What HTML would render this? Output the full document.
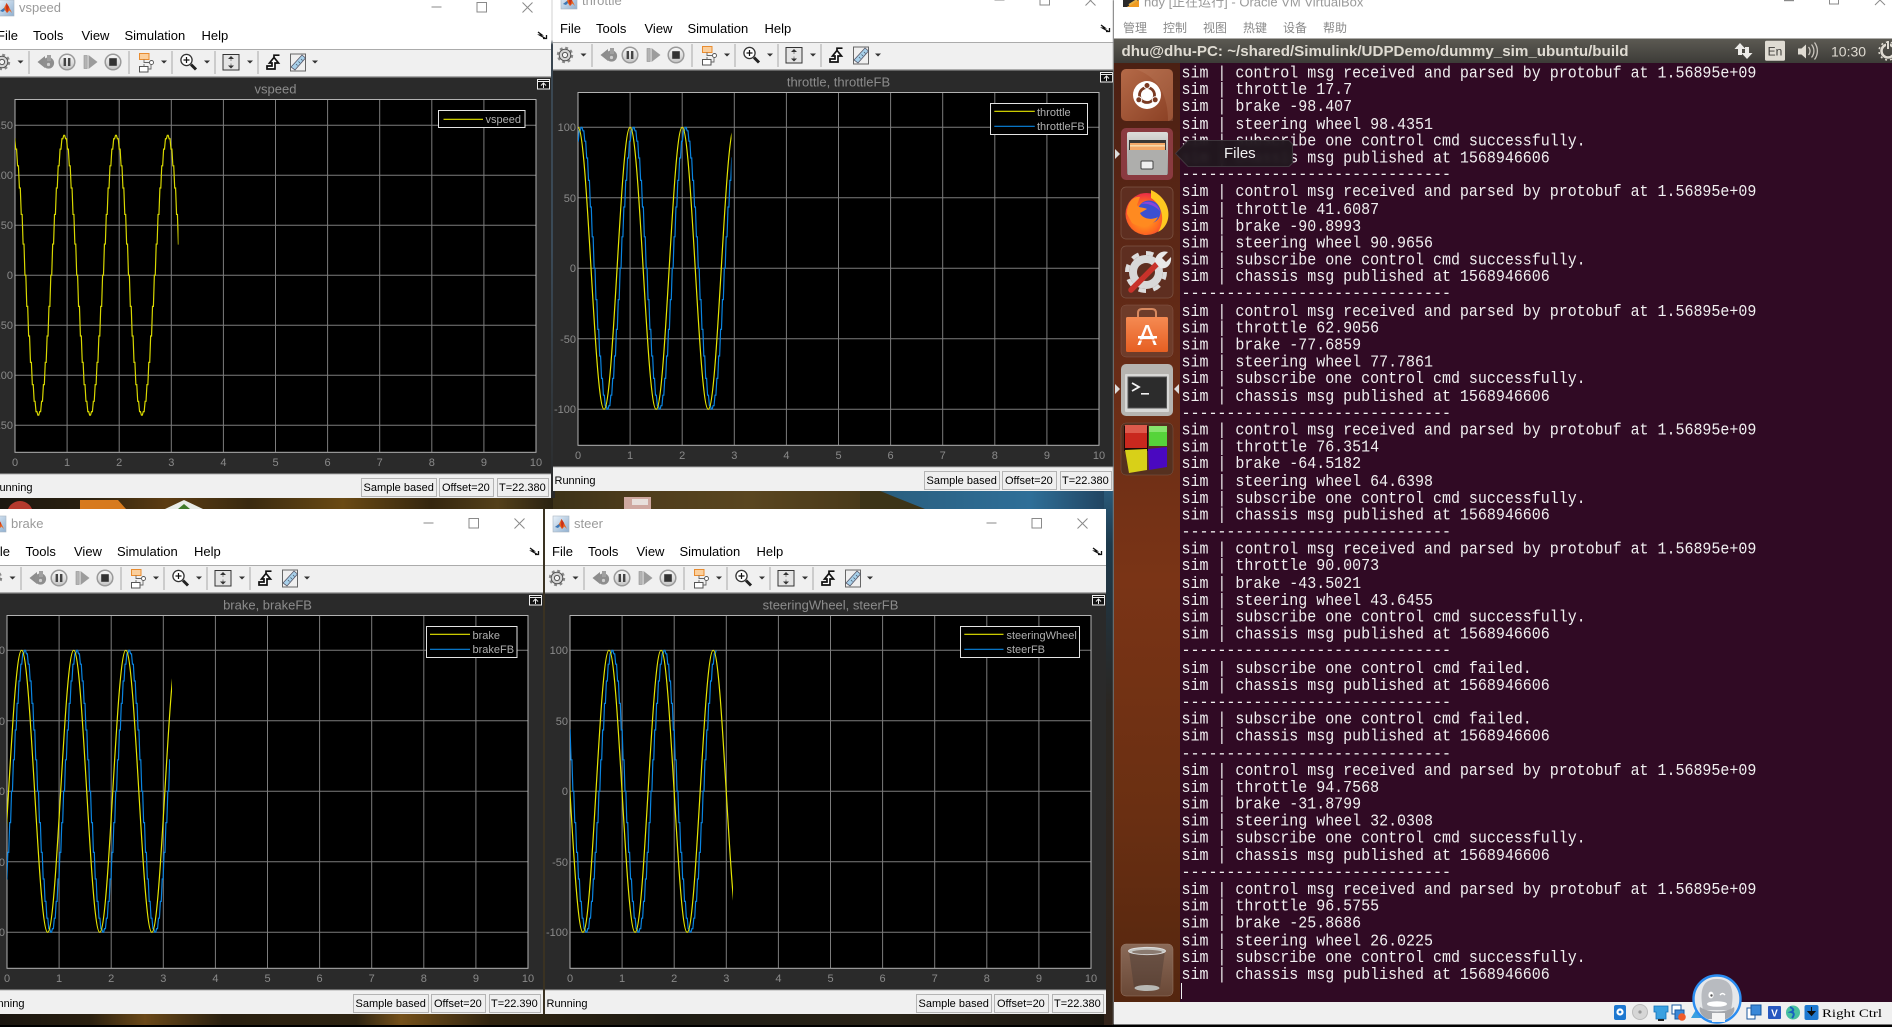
<!DOCTYPE html>
<html><head><meta charset="utf-8"><title>Simulink scopes and VirtualBox terminal</title>
<style>
html,body{margin:0;padding:0;width:1892px;height:1027px;overflow:hidden;background:#000}
.abs{position:absolute}
svg{position:absolute;overflow:hidden}
svg text{font-family:"Liberation Sans","Noto Sans CJK SC",sans-serif}
.w{position:absolute;width:561px;height:505px}
.m{font-size:13px;fill:#000}.tt{font-size:13px;fill:#9a9a9a}.at{font-size:13px;fill:#8c8c8c;text-anchor:middle}
.xl{font-size:11px;fill:#8a8a8a;text-anchor:middle}.yl{font-size:11px;fill:#8a8a8a;text-anchor:end}
.lg{font-size:11px;fill:#b0b0b0}.st{font-size:11px;fill:#000}
#term{position:absolute;left:1180px;top:63px;width:712px;height:939px;background:#300a24;overflow:hidden}
#term pre{position:absolute;left:1.5px;top:2px;margin:0;font:15px/15.18px "Liberation Mono",monospace;color:#f0eff0;letter-spacing:-.02px;transform:scaleY(1.12);transform-origin:0 0}
#tip{position:absolute;left:1175px;top:140px;width:118px;height:27px;background:rgba(32,24,30,.93);backdrop-filter:blur(2.5px);clip-path:polygon(0 50%,13px 0,calc(100% - 4px) 0,100% 4px,100% calc(100% - 4px),calc(100% - 4px) 100%,13px 100%);color:#f2f2f2;font:15px "Liberation Sans",sans-serif;line-height:27px;text-indent:49px}
</style></head><body>

<svg width="0" height="0" style="position:absolute">
<defs>
<linearGradient id="ml" x1="0" y1="0" x2="1" y2="1"><stop offset="0" stop-color="#eaf2fa"/><stop offset="1" stop-color="#8fb0d0"/></linearGradient>
<linearGradient id="btn" x1="0" y1="0" x2="0" y2="1"><stop offset="0" stop-color="#fafafa"/><stop offset="1" stop-color="#c4c4c4"/></linearGradient>
<linearGradient id="pn" x1="0" y1="0" x2="0" y2="1"><stop offset="0" stop-color="#5c5a53"/><stop offset="1" stop-color="#3c3b37"/></linearGradient>
<linearGradient id="ub" x1="0" y1="0" x2="1" y2="1"><stop offset="0" stop-color="#b56a48"/><stop offset="1" stop-color="#8a4024"/></linearGradient>
<linearGradient id="cab" x1="0" y1="0" x2="0" y2="1"><stop offset="0" stop-color="#dcdcda"/><stop offset="1" stop-color="#8e8e8c"/></linearGradient>
<linearGradient id="bag" x1="0" y1="0" x2="0" y2="1"><stop offset="0" stop-color="#f58a52"/><stop offset="1" stop-color="#e65f22"/></linearGradient>
<linearGradient id="trs" x1="0" y1="0" x2="0" y2="1"><stop offset="0" stop-color="#8a6a58"/><stop offset="1" stop-color="#6a4836"/></linearGradient>
<radialGradient id="ff" cx=".45" cy=".6" r=".6"><stop offset="0" stop-color="#ffb020"/><stop offset=".6" stop-color="#ff6a20"/><stop offset="1" stop-color="#ea2c48"/></radialGradient>

<g id="matlab">
<rect x="0" y="0" width="16" height="16" fill="url(#ml)" stroke="#a8b4c0" stroke-width=".6"/>
<path d="M2 11 L6 8 L8.5 3 L11 7 L14 13 L11.5 10.5 L9 13 L6.5 9.5Z" fill="#e8601c"/>
<path d="M2 11 L6 8 L7 10 L5 12Z" fill="#3a78b8"/>
<path d="M8.5 3 L11 7 L9 13 L8 8Z" fill="#c8301a"/>
</g>

<g id="tb">
<rect width="561" height="26" fill="#f0f0f0"/>
<g stroke="#a8a8a8" stroke-width="1"><path d="M39 1V24M139 1V24M182 1V24M225 1V24M268 1V24"/></g>
<g fill="#333"><path d="M27.5 10.5h6l-3 3zM171 10.5h6l-3 3zM214 10.5h6l-3 3zM257 10.5h6l-3 3zM322 10.5h6l-3 3z"/></g>
<!-- gear -->
<circle cx="12" cy="12" r="7" fill="none" stroke="#8a8a8a" stroke-width="2.4" stroke-dasharray="2.8 2.7"/>
<circle cx="12" cy="12" r="5.8" fill="#d4d4d4" stroke="#555" stroke-width="1"/>
<circle cx="12" cy="12" r="2.6" fill="#f4f4f4" stroke="#555" stroke-width="1"/>
<!-- back -->
<path d="M47.5 12 L55 6 V18Z" fill="#8c8c8c"/><circle cx="58.5" cy="13" r="5.6" fill="#8e8e8e"/><rect x="57" y="5" width="4" height="6" fill="#a0a0a0"/><circle cx="58.5" cy="14.5" r="1.6" fill="#cfcfcf"/>
<!-- pause -->
<circle cx="77" cy="12" r="7.8" fill="url(#btn)" stroke="#9a9a9a" stroke-width="1.5"/><rect x="73.6" y="8" width="2.4" height="8" fill="#444"/><rect x="78" y="8" width="2.4" height="8" fill="#444"/>
<!-- step -->
<rect x="94" y="5.5" width="3.2" height="13" fill="#b4b4b4" stroke="#909090" stroke-width=".6"/><path d="M98.5 5 L107.5 12 L98.5 19Z" fill="#9c9c9c"/>
<!-- stop -->
<circle cx="123" cy="12" r="7.8" fill="url(#btn)" stroke="#9a9a9a" stroke-width="1.5"/><rect x="119.2" y="8.2" width="7.6" height="7.6" fill="#333"/>
<!-- block -->
<rect x="149.5" y="3.5" width="9.5" height="6" fill="#fbcf9c" stroke="#e88c30" stroke-width="1"/>
<rect x="149.5" y="16.5" width="8.5" height="5.5" fill="#fff" stroke="#555" stroke-width="1"/>
<circle cx="161.5" cy="12.5" r="2" fill="#fff" stroke="#555" stroke-width=".9"/><path d="M154 9.5V12.5H159M154 16.5V14M158 19H161V14.5" fill="none" stroke="#666" stroke-width=".9"/>
<!-- zoom -->
<circle cx="196.5" cy="10" r="5.6" fill="#fff" stroke="#333" stroke-width="1.3"/><path d="M193.5 10h6M196.5 7v6" stroke="#111" stroke-width="1.2"/><path d="M201 14.5 L206 19.5" stroke="#222" stroke-width="3"/>
<!-- scale -->
<rect x="233" y="4.5" width="16" height="15.5" fill="#e4e4e4" stroke="#333" stroke-width="1"/><path d="M241 6l-3 3h6zM241 18.5l-3-3h6z" fill="#333"/><path d="M241 9v2M241 13.5v2" stroke="#888" stroke-width="1"/>
<!-- stairs arrow -->
<path d="M277 19h8v-6h3.5l-4.5-5.5-4.5 5.5h2.5v3h-5z" fill="#fff" stroke="#111" stroke-width="1.7" stroke-linejoin="miter"/><path d="M284 7V5.2H289.5" fill="none" stroke="#111" stroke-width="1.7"/>
<!-- ruler -->
<rect x="300.5" y="4" width="15" height="17" fill="#efefef" stroke="#666" stroke-width="1"/><path d="M301 17 L312 5 L315.5 8 L305 20Z" fill="#a8d0ea" stroke="#556" stroke-width=".8"/><path d="M306 14l1.5 1.5M308.5 11.5l1.5 1.5M311 9l1.5 1.5" stroke="#456" stroke-width=".7"/>
</g>

<g id="ch">
<rect width="561" height="505" fill="#fff"/>
<rect y="56" width="561" height="1.2" fill="#ababab"/>
<use href="#tb" y="57"/>
<rect y="83" width="561" height="1.4" fill="#ababab"/>
<rect y="84.4" width="561" height="397" fill="#2a2a2a"/>
<rect y="481" width="561" height="24" fill="#f0f0f0"/>
<rect y="480.6" width="561" height="1.2" fill="#c8c8c8"/>
<g fill="#efefef" stroke="#b4b4b4" stroke-width="1"><rect x="371.5" y="485.5" width="75" height="18"/><rect x="449.5" y="485.5" width="54" height="18"/><rect x="507.5" y="485.5" width="51" height="18"/></g>
<path d="M441.5 14h10" stroke="#8a8a8a" stroke-width="1"/><rect x="487" y="9.5" width="9.5" height="9.5" fill="none" stroke="#8a8a8a" stroke-width="1"/><path d="M532.5 9.5l10 10M542.5 9.5l-10 10" stroke="#8a8a8a" stroke-width="1"/>
<path d="M548 39l4 3h-2.5l6 3.5M553 45.5h3.5v-3.5" fill="none" stroke="#111" stroke-width="1.3"/>
<rect x="547.5" y="86.5" width="12" height="9.5" fill="#111" stroke="#eee" stroke-width="1"/><path d="M548 88.5h11" stroke="#eee"/><path d="M553.5 95V90.5M551 92.5l2.5-2.5 2.5 2.5" fill="none" stroke="#eee" stroke-width="1"/>
<rect x="25" y="106.5" width="521" height="352.8" fill="#000"/>
<path d="M77.1 106.5V459.3M129.2 106.5V459.3M181.3 106.5V459.3M233.4 106.5V459.3M285.5 106.5V459.3M337.6 106.5V459.3M389.7 106.5V459.3M441.8 106.5V459.3M493.9 106.5V459.3" stroke="#7c7c7c" stroke-width="1" fill="none"/>
</g>

<g id="fr"><rect x="25" y="106.5" width="521" height="352.8" fill="none" stroke="#b2b2b2" stroke-width="1"/></g>

<path id="ys" d="M0 0c9.49 0 16.56 282 26.05 282s16.56-282 26.05-282s16.56 282 26.05 282s16.56-282 26.05-282s16.56 282 26.05 282s16.56-282 26.05-282s16.56 282 26.05 282s16.56-282 26.05-282s16.56 282 26.05 282s16.56-282 26.05-282s16.56 282 26.05 282s16.56-282 26.05-282" fill="none" stroke-width="1.2"/>
<path id="bs" d="M0 0h.9l.96 3.5h.9l.96 10.4h.9l.96 16.8h.9l.96 22.4h.9l.96 26.6h.9l.96 29.8h.9l.96 31.4h.9l.96 31.4h.9l.96 29.8h.9l.96 26.6h.9l.96 22.4h.9l.96 16.8h.9l.96 10.4h.9l.96 3.5h.9l.96-3.5h.9l.96-10.4h.9l.96-16.8h.9l.96-22.4h.9l.96-26.6h.9l.96-29.8h.9l.96-31.4h.9l.96-31.4h.9l.96-29.8h.9l.96-26.6h.9l.96-22.4h.9l.96-16.8h.9l.96-10.4h.9l.96-3.5h.9l.96 3.5h.9l.96 10.4h.9l.96 16.8h.9l.96 22.4h.9l.96 26.6h.9l.96 29.8h.9l.96 31.4h.9l.96 31.4h.9l.96 29.8h.9l.96 26.6h.9l.96 22.4h.9l.96 16.8h.9l.96 10.4h.9l.96 3.5h.9l.96-3.5h.9l.96-10.4h.9l.96-16.8h.9l.96-22.4h.9l.96-26.6h.9l.96-29.8h.9l.96-31.4h.9l.96-31.4h.9l.96-29.8h.9l.96-26.6h.9l.96-22.4h.9l.96-16.8h.9l.96-10.4h.9l.96-3.5h.9l.96 3.5h.9l.96 10.4h.9l.96 16.8h.9l.96 22.4h.9l.96 26.6h.9l.96 29.8h.9l.96 31.4h.9l.96 31.4h.9l.96 29.8h.9l.96 26.6h.9l.96 22.4h.9l.96 16.8h.9l.96 10.4h.9l.96 3.5h.9l.96-3.5h.9l.96-10.4h.9l.96-16.8h.9l.96-22.4h.9l.96-26.6h.9l.96-29.8h.9l.96-31.4h.9l.96-31.4h.9l.96-29.8h.9l.96-26.6h.9l.96-22.4h.9l.96-16.8h.9l.96-10.4h.9l.96-3.5h.9l.96 3.5h.9l.96 10.4h.9l.96 16.8h.9l.96 22.4h.9l.96 26.6h.9l.96 29.8h.9l.96 31.4h.9l.96 31.4h.9l.96 29.8h.9l.96 26.6h.9l.96 22.4h.9l.96 16.8h.9l.96 10.4h.9l.96 3.5h.9l.96-3.5h.9l.96-10.4h.9l.96-16.8h.9l.96-22.4h.9l.96-26.6h.9l.96-29.8h.9l.96-31.4h.9l.96-31.4h.9l.96-29.8h.9l.96-26.6h.9l.96-22.4h.9l.96-16.8h.9l.96-10.4h.9l.96-3.5" fill="none" stroke-width="1.2"/>

<clipPath id="cv"><rect x="25" y="106" width="163.5" height="353"/></clipPath>
<clipPath id="ct"><rect x="25" y="106" width="153.5" height="353"/></clipPath>
<clipPath id="cb"><rect x="25" y="106" width="165" height="353"/></clipPath>
<clipPath id="cb2"><rect x="25" y="106" width="163" height="353"/></clipPath>
<clipPath id="cs"><rect x="25" y="106" width="163" height="353"/></clipPath>
<clipPath id="cs2"><rect x="25" y="106" width="161" height="353"/></clipPath>
</defs>
</svg>

<!-- desktop wallpaper strips -->
<div class="abs" style="left:0;top:495px;width:553px;height:16px;background:linear-gradient(90deg,#1c1810 0,#2a2010 15%,#5c3c12 30%,#3a2a10 45%,#6a4a14 62%,#35260f 78%,#54401a 90%,#2a2212 100%)"></div>
<div class="abs" style="left:553px;top:488px;width:561px;height:23px;background:linear-gradient(90deg,#3c3218 0,#4e3c1c 15%,#5a4620 35%,#4a3a1a 55%,#2a5f80 60%,#2f6f98 85%,#1f3f5a 100%)"></div>
<svg width="1114" height="520" style="left:0;top:0">
<circle cx="20" cy="514" r="13" fill="#b53a2e"/>
<path d="M80 500H118L126 509H80Z" fill="#d77a1e"/>
<path d="M184 500L203 509H165Z" fill="#e8ece8"/><path d="M184 504L190 509H178Z" fill="#3f7a2a"/>
<path d="M624 497H651V509H624Z" fill="#cfa8a0"/><path d="M632 499H648V505H632Z" fill="#e8e0dc"/>
<path d="M880 491L925 509H860V491Z" fill="#3c3418"/>
</svg>
<div class="abs" style="left:0;top:1012px;width:1114px;height:13px;background:linear-gradient(90deg,#1a1610 0,#2a2010 8%,#6a4818 13%,#2a2010 20%,#2e2412 32%,#74501a 36%,#302410 44%,#1e1c14 60%,#2a2418 80%,#1a1610 100%)"></div>
<div class="abs" style="left:541px;top:509px;width:6px;height:505px;background:#3a3222"></div>
<div class="abs" style="left:1104px;top:491px;width:11px;height:534px;background:linear-gradient(180deg,#2a5a7a 0,#1e3a4c 10%,#2a2622 40%,#33241a 100%)"></div>
<div class="abs" style="left:549px;top:0;width:6px;height:498px;background:linear-gradient(180deg,#e8e8e8 0,#e8e8e8 8%,#3a4650 9%,#3a4a58 50%,#2a2a2a 100%)"></div>

<!-- vspeed -->
<div class="w" style="left:-10.5px;top:-7px"><svg width="561" height="505" style="left:0;top:0">
<use href="#ch"/>
<path d="M25 132.3H546M25 182.3H546M25 232.3H546M25 282.3H546M25 332.3H546M25 382.3H546M25 432.3H546" stroke="#7c7c7c" fill="none"/>
<use href="#fr"/>
<g clip-path="url(#cv)"><use href="#bs" transform="translate(22,142.3) scale(.994,.993)" stroke="#d8d800"/></g>
<use href="#matlab" x="8" y="7"/>
<text class="tt" x="29" y="19">vspeed</text>
<text class="m" x="7" y="47">File</text><text class="m" x="43" y="47">Tools</text><text class="m" x="91.5" y="47">View</text><text class="m" x="134.5" y="47">Simulation</text><text class="m" x="211.5" y="47">Help</text>
<text class="at" x="285.5" y="100.5">vspeed</text>
<text class="yl" x="23" y="136">150</text><text class="yl" x="23" y="186">100</text><text class="yl" x="23" y="236">50</text><text class="yl" x="23" y="286">0</text><text class="yl" x="23" y="336">-50</text><text class="yl" x="23" y="386">-100</text><text class="yl" x="23" y="436">-150</text>
<text class="xl" x="25" y="473">0</text><text class="xl" x="77.1" y="473">1</text><text class="xl" x="129.2" y="473">2</text><text class="xl" x="181.3" y="473">3</text><text class="xl" x="233.4" y="473">4</text><text class="xl" x="285.5" y="473">5</text><text class="xl" x="337.6" y="473">6</text><text class="xl" x="389.7" y="473">7</text><text class="xl" x="441.8" y="473">8</text><text class="xl" x="493.9" y="473">9</text><text class="xl" x="546" y="473">10</text>
<rect x="448.5" y="117.5" width="86.5" height="17" fill="#000" stroke="#e4e4e4"/>
<path d="M453.5 126.3H493" stroke="#e6e600" stroke-width="1.2"/><text class="lg" x="495.5" y="130">vspeed</text>
<text class="st" x="1.5" y="498">Running</text><text class="st" x="373.5" y="498">Sample based</text><text class="st" x="452" y="498">Offset=20</text><text class="st" x="509" y="498">T=22.380</text>
</svg></div>

<!-- throttle -->
<div class="w" style="left:552.5px;top:-14px"><svg width="561" height="505" style="left:0;top:0">
<use href="#ch"/>
<path d="M25 141.3H546M25 211.8H546M25 282.3H546M25 352.8H546M25 423.3H546" stroke="#7c7c7c" fill="none"/>
<use href="#fr"/>
<g clip-path="url(#ct)"><use href="#bs" transform="translate(-24,141.3)" stroke="#0a84e0"/><use href="#ys" transform="translate(-27.1,141.3)" stroke="#e6e600"/></g>
<use href="#matlab" x="8" y="7"/>
<text class="tt" x="29" y="19">throttle</text>
<text class="m" x="7" y="47">File</text><text class="m" x="43" y="47">Tools</text><text class="m" x="91.5" y="47">View</text><text class="m" x="134.5" y="47">Simulation</text><text class="m" x="211.5" y="47">Help</text>
<text class="at" x="285.5" y="100.5">throttle, throttleFB</text>
<text class="yl" x="23" y="145">100</text><text class="yl" x="23" y="216">50</text><text class="yl" x="23" y="286">0</text><text class="yl" x="23" y="357">-50</text><text class="yl" x="23" y="427">-100</text>
<text class="xl" x="25" y="473">0</text><text class="xl" x="77.1" y="473">1</text><text class="xl" x="129.2" y="473">2</text><text class="xl" x="181.3" y="473">3</text><text class="xl" x="233.4" y="473">4</text><text class="xl" x="285.5" y="473">5</text><text class="xl" x="337.6" y="473">6</text><text class="xl" x="389.7" y="473">7</text><text class="xl" x="441.8" y="473">8</text><text class="xl" x="493.9" y="473">9</text><text class="xl" x="546" y="473">10</text>
<rect x="437.5" y="117.5" width="97" height="31" fill="#000" stroke="#e4e4e4"/>
<path d="M441.3 125.3H481.8" stroke="#e6e600" stroke-width="1.2"/><path d="M441.3 140.3H481.8" stroke="#0a84e0" stroke-width="1.2"/>
<text class="lg" x="484" y="130">throttle</text><text class="lg" x="484" y="144">throttleFB</text>
<text class="st" x="1.5" y="498">Running</text><text class="st" x="373.5" y="498">Sample based</text><text class="st" x="452" y="498">Offset=20</text><text class="st" x="509" y="498">T=22.380</text>
</svg></div>

<!-- brake -->
<div class="w" style="left:-18.5px;top:509px"><svg width="561" height="505" style="left:0;top:0">
<use href="#ch"/>
<path d="M25 141.3H546M25 211.8H546M25 282.3H546M25 352.8H546M25 423.3H546" stroke="#7c7c7c" fill="none"/>
<use href="#fr"/>
<g clip-path="url(#cb2)"><use href="#bs" transform="translate(-9.5,141.3)" stroke="#0a84e0"/></g><g clip-path="url(#cb)"><use href="#ys" transform="translate(-12.5,141.3)" stroke="#e6e600"/></g>
<use href="#matlab" x="8" y="7"/>
<text class="tt" x="29" y="19">brake</text>
<text class="m" x="7" y="47">File</text><text class="m" x="43.5" y="47">Tools</text><text class="m" x="92" y="47">View</text><text class="m" x="135" y="47">Simulation</text><text class="m" x="212" y="47">Help</text>
<text class="at" x="285.5" y="100.5">brake, brakeFB</text>
<text class="yl" x="23" y="145">100</text><text class="yl" x="23" y="216">50</text><text class="yl" x="23" y="286">0</text><text class="yl" x="23" y="357">-50</text><text class="yl" x="23" y="427">-100</text>
<text class="xl" x="25" y="473">0</text><text class="xl" x="77.1" y="473">1</text><text class="xl" x="129.2" y="473">2</text><text class="xl" x="181.3" y="473">3</text><text class="xl" x="233.4" y="473">4</text><text class="xl" x="285.5" y="473">5</text><text class="xl" x="337.6" y="473">6</text><text class="xl" x="389.7" y="473">7</text><text class="xl" x="441.8" y="473">8</text><text class="xl" x="493.9" y="473">9</text><text class="xl" x="546" y="473">10</text>
<rect x="444.5" y="117.5" width="90.5" height="31" fill="#000" stroke="#e4e4e4"/>
<path d="M448 125.3H488" stroke="#e6e600" stroke-width="1.2"/><path d="M448 140.3H488" stroke="#0a84e0" stroke-width="1.2"/>
<text class="lg" x="490.5" y="130">brake</text><text class="lg" x="490.5" y="144">brakeFB</text>
<text class="st" x="1.5" y="498">Running</text><text class="st" x="373.5" y="498">Sample based</text><text class="st" x="452" y="498">Offset=20</text><text class="st" x="509" y="498">T=22.390</text>
</svg></div>

<!-- steer -->
<div class="w" style="left:544.5px;top:509px"><svg width="561" height="505" style="left:0;top:0">
<use href="#ch"/>
<path d="M25 141.3H546M25 211.8H546M25 282.3H546M25 352.8H546M25 423.3H546" stroke="#7c7c7c" fill="none"/>
<use href="#fr"/>
<g clip-path="url(#cs2)"><use href="#bs" transform="translate(-37.2,141.3)" stroke="#0a84e0"/></g><g clip-path="url(#cs)"><use href="#ys" transform="translate(-40.2,141.3)" stroke="#e6e600"/></g>
<use href="#matlab" x="8" y="7"/>
<text class="tt" x="29" y="19">steer</text>
<text class="m" x="7" y="47">File</text><text class="m" x="43" y="47">Tools</text><text class="m" x="91.5" y="47">View</text><text class="m" x="134.5" y="47">Simulation</text><text class="m" x="211.5" y="47">Help</text>
<text class="at" x="285.5" y="100.5">steeringWheel, steerFB</text>
<text class="yl" x="23" y="145">100</text><text class="yl" x="23" y="216">50</text><text class="yl" x="23" y="286">0</text><text class="yl" x="23" y="357">-50</text><text class="yl" x="23" y="427">-100</text>
<text class="xl" x="25" y="473">0</text><text class="xl" x="77.1" y="473">1</text><text class="xl" x="129.2" y="473">2</text><text class="xl" x="181.3" y="473">3</text><text class="xl" x="233.4" y="473">4</text><text class="xl" x="285.5" y="473">5</text><text class="xl" x="337.6" y="473">6</text><text class="xl" x="389.7" y="473">7</text><text class="xl" x="441.8" y="473">8</text><text class="xl" x="493.9" y="473">9</text><text class="xl" x="546" y="473">10</text>
<rect x="415.5" y="117.5" width="119" height="31" fill="#000" stroke="#e4e4e4"/>
<path d="M419.3 125.3H458.5" stroke="#e6e600" stroke-width="1.2"/><path d="M419.3 140.3H458.5" stroke="#0a84e0" stroke-width="1.2"/>
<text class="lg" x="461.5" y="130">steeringWheel</text><text class="lg" x="461.5" y="144">steerFB</text>
<text class="st" x="1.5" y="498">Running</text><text class="st" x="373.5" y="498">Sample based</text><text class="st" x="452" y="498">Offset=20</text><text class="st" x="509" y="498">T=22.380</text>
</svg></div>

<!-- VirtualBox window -->
<div class="abs" style="left:1114px;top:0;width:778px;height:1025px;background:#fff;box-shadow:-1px 0 1px #777"></div>
<svg width="779" height="64" style="left:1113px;top:0">
<path d="M10 7V0H26L14 7Z" fill="#2a2a2a"/><path d="M14 7L26 0V7Z" fill="#f09a20"/><path d="M16 5L24 0" stroke="#e8b040" stroke-width="2"/>
<text x="31" y="6.5" fill="#9a9a9a" style="font-size:13px">hdy [正在运行] - Oracle VM VirtualBox</text>
<rect x="671" y="0" width="10" height="1.2" fill="#8a8a8a"/><rect x="716.5" y="-3" width="9" height="7" fill="none" stroke="#8a8a8a"/><path d="M762 5l5-5 5 5" fill="none" stroke="#8a8a8a"/>
<g style="font-size:12px" fill="#8a8a8a"><text x="10" y="32">管理</text><text x="50" y="32">控制</text><text x="90" y="32">视图</text><text x="130" y="32">热键</text><text x="170" y="32">设备</text><text x="210" y="32">帮助</text></g>
<rect x="1" y="38.5" width="778" height="25" fill="url(#pn)"/>
<text x="8.5" y="56" fill="#dfdbd2" textLength="507" lengthAdjust="spacingAndGlyphs" style="font-size:15px;font-weight:bold">dhu@dhu-PC: ~/shared/Simulink/UDPDemo/dummy_sim_ubuntu/build</text>
<g fill="#ecebe8"><path d="M627 43l-5.5 6h3.5v6h4v-6h3.5z"/><path d="M634 59l5.5-6h-3.5v-6h-4v6h-3.5z"/></g>
<rect x="652" y="40.7" width="20" height="20" rx="1.5" fill="#dfdbd2"/><text x="662" y="55.5" text-anchor="middle" fill="#3c3b37" style="font-size:12px">En</text>
<path d="M685 48.5h3.5l4.5-4v14l-4.5-4H685z" fill="#dfdbd2"/><path d="M695.5 47a6 6 0 0 1 0 8M698.5 44.5a10 10 0 0 1 0 13M701.5 42.5a14 14 0 0 1 0 17" fill="none" stroke="#dfdbd2" stroke-width="1.3" opacity=".85"/>
<text x="718" y="56.5" fill="#dfdbd2" style="font-size:14px">10:30</text>
<circle cx="775" cy="51" r="6.5" fill="none" stroke="#dfdbd2" stroke-width="2.5"/><path d="M775 41v9" stroke="#4a4945" stroke-width="4"/><path d="M775 41v8" stroke="#dfdbd2" stroke-width="2"/><circle cx="775" cy="51" r="9" fill="none" stroke="#dfdbd2" stroke-width="1.5" stroke-dasharray="2 3"/>
</svg>

<div id="term"><pre>sim | control msg received and parsed by protobuf at 1.56895e+09
sim | throttle 17.7
sim | brake -98.407
sim | steering wheel 98.4351
sim | subscribe one control cmd successfully.
sim | chassis msg published at 1568946606
------------------------------
sim | control msg received and parsed by protobuf at 1.56895e+09
sim | throttle 41.6087
sim | brake -90.8993
sim | steering wheel 90.9656
sim | subscribe one control cmd successfully.
sim | chassis msg published at 1568946606
------------------------------
sim | control msg received and parsed by protobuf at 1.56895e+09
sim | throttle 62.9056
sim | brake -77.6859
sim | steering wheel 77.7861
sim | subscribe one control cmd successfully.
sim | chassis msg published at 1568946606
------------------------------
sim | control msg received and parsed by protobuf at 1.56895e+09
sim | throttle 76.3514
sim | brake -64.5182
sim | steering wheel 64.6398
sim | subscribe one control cmd successfully.
sim | chassis msg published at 1568946606
------------------------------
sim | control msg received and parsed by protobuf at 1.56895e+09
sim | throttle 90.0073
sim | brake -43.5021
sim | steering wheel 43.6455
sim | subscribe one control cmd successfully.
sim | chassis msg published at 1568946606
------------------------------
sim | subscribe one control cmd failed.
sim | chassis msg published at 1568946606
------------------------------
sim | subscribe one control cmd failed.
sim | chassis msg published at 1568946606
------------------------------
sim | control msg received and parsed by protobuf at 1.56895e+09
sim | throttle 94.7568
sim | brake -31.8799
sim | steering wheel 32.0308
sim | subscribe one control cmd successfully.
sim | chassis msg published at 1568946606
------------------------------
sim | control msg received and parsed by protobuf at 1.56895e+09
sim | throttle 96.5755
sim | brake -25.8686
sim | steering wheel 26.0225
sim | subscribe one control cmd successfully.
sim | chassis msg published at 1568946606</pre>
<div class="abs" style="left:1px;top:920px;width:1px;height:16px;background:#eee"></div>
</div>

<div class="abs" style="left:1114px;top:63px;width:66px;height:939px;background:linear-gradient(180deg,#4b2013 0,#652b17 30%,#7a3416 55%,#6a2f12 80%,#54260f 100%)"></div>

<div id="tip">Files</div>

<!-- launcher icons and bottom tray -->
<svg width="1892" height="1027" style="left:0;top:0;pointer-events:none">
<path d="M1175.5 153.5L1188 140.5H1289L1292.5 144V163L1289 166.5H1188Z" fill="none" stroke="#fff" stroke-opacity=".13"/>
<!-- ubuntu -->
<rect x="1121" y="69" width="52" height="52" rx="5" fill="url(#ub)"/>
<path d="M1135 69Q1168 80 1168 121H1173V74Q1173 69 1168 69Z" fill="#c98a6c" opacity=".25"/>
<circle cx="1147" cy="95" r="14" fill="#fff"/><circle cx="1147" cy="95" r="7.5" fill="none" stroke="#7a3a22" stroke-width="2.8"/>
<circle cx="1147" cy="85.5" r="3" fill="#7a3a22" stroke="#fff" stroke-width="1"/><circle cx="1138.8" cy="99.8" r="3" fill="#7a3a22" stroke="#fff" stroke-width="1"/><circle cx="1155.2" cy="99.8" r="3" fill="#7a3a22" stroke="#fff" stroke-width="1"/>
<!-- files -->
<rect x="1121" y="128" width="52" height="52" rx="5" fill="#8a3a40"/>
<rect x="1127" y="132" width="41" height="43" rx="2" fill="url(#cab)"/>
<rect x="1129" y="140" width="37" height="10" fill="#3a3634"/><rect x="1130" y="143" width="35" height="7" fill="#f4a868"/><rect x="1130" y="145" width="35" height="1.6" fill="#f8d8a8"/>
<rect x="1128" y="150" width="39" height="25" fill="#aeaeac"/><rect x="1141" y="161" width="12" height="8" rx="1" fill="#f0f0f0" stroke="#444" stroke-width="1"/>
<path d="M1115 149l5 5-5 5z" fill="#dcdcdc"/>
<!-- firefox -->
<rect x="1121" y="187" width="52" height="52" rx="5" fill="#5e2e20" stroke="#7c5444" stroke-width=".7"/>
<circle cx="1146.5" cy="214" r="21" fill="url(#ff)"/>
<path d="M1151 190C1173 200 1173 225 1158 232C1166 220 1162 205 1151 198Z" fill="#ffc820"/>
<circle cx="1149" cy="212" r="11.5" fill="#3c50d0"/><path d="M1141 204C1148 199 1158 203 1160 211C1154 205 1147 203 1141 204Z" fill="#8a44d8"/>
<path d="M1127 214C1127 202 1133 196 1140 197L1137 205C1138 208 1143 207 1147 209L1140 213C1142 218 1150 221 1158 217C1154 226 1140 229 1132 223Z" fill="#ff8a20"/>
<!-- settings -->
<rect x="1121" y="246" width="52" height="52" rx="5" fill="#5e2e20" stroke="#7c5444" stroke-width=".7"/>
<circle cx="1146" cy="272" r="19" fill="none" stroke="#dcdcdc" stroke-width="4" stroke-dasharray="7.5 7.4"/>
<circle cx="1146" cy="272" r="13" fill="none" stroke="#d8d8d8" stroke-width="8"/>
<path d="M1131 290L1158 263" stroke="#c8322a" stroke-width="5.5" stroke-linecap="round"/>
<path d="M1155 262C1155 254 1162 250 1168 252L1162 258L1166 262L1171 257C1172 264 1167 270 1160 268Z" fill="#e8e8e8"/>
<!-- software -->
<rect x="1121" y="305" width="52" height="52" rx="5" fill="#6e3c2a" stroke="#85594a" stroke-width=".5"/>
<path d="M1138 317v-4q0-4 4-4h10q4 0 4 4v4" fill="none" stroke="#d88a60" stroke-width="2"/>
<rect x="1126" y="317" width="42" height="35" rx="1.5" fill="url(#bag)"/>
<text x="1147" y="345" text-anchor="middle" fill="#fff" style="font-size:29px">A</text>
<rect x="1138" y="336" width="19" height="2.5" fill="#fff"/><rect x="1138" y="339.5" width="19" height="1" fill="#e65f22"/>
<!-- terminal -->
<rect x="1121" y="364" width="52" height="52" rx="5" fill="#b6b4b0"/>
<rect x="1125" y="374" width="44" height="38" rx="1" fill="#d8d8d6"/><rect x="1128" y="377" width="38.5" height="31" fill="#2c2c2c" stroke="#555"/>
<path d="M1132 383l7 4-7 4" fill="none" stroke="#f2f2f2" stroke-width="1.8"/><rect x="1141" y="393" width="8" height="1.6" fill="#f2f2f2"/>
<path d="M1115 384l5 5-5 5zM1179 384l-5 5 5 5z" fill="#dcdcdc"/>
<!-- cubes -->
<rect x="1121" y="423" width="52" height="52" rx="5" fill="#55301f" stroke="#78584a" stroke-width=".5"/>
<rect x="1124" y="426" width="24" height="25" fill="#1a0a08"/>
<rect x="1125" y="425" width="22" height="23" fill="#c9281e"/><rect x="1125" y="425" width="22" height="8" fill="#dd5a4c"/>
<rect x="1149" y="426" width="18" height="20" fill="#56d43a"/><rect x="1149" y="426" width="18" height="6" fill="#86e46c"/>
<path d="M1125 450L1147 449V470L1129 473Z" fill="#d8d018"/>
<path d="M1148 449L1167 447V467L1149 470Z" fill="#4a08c0"/>
<!-- trash -->
<rect x="1121" y="944" width="52" height="52" rx="5" fill="url(#trs)" stroke="#9a7a68" stroke-width=".5"/>
<path d="M1129 951L1134 988H1160L1165 951Z" fill="#4a3a32" opacity=".45"/>
<ellipse cx="1147" cy="951" rx="18.5" ry="3.6" fill="#c4c4c0" stroke="#ddd"/><ellipse cx="1147" cy="952" rx="15" ry="2.2" fill="#8a7a70"/>
<ellipse cx="1147" cy="988" rx="12.5" ry="3" fill="#b8b8b4"/>

<!-- tray -->
<rect x="1114" y="1002" width="778" height="23" fill="#f0f0f0"/>
<rect x="1113" y="1024.5" width="779" height="3" fill="#000"/>
<rect x="1614" y="1005" width="12" height="15" rx="2" fill="#1e78d0"/><circle cx="1620" cy="1012" r="3.6" fill="#fff"/><circle cx="1620" cy="1012" r="1.4" fill="#1e78d0"/>
<circle cx="1640" cy="1012" r="7.5" fill="#d6d6d6" stroke="#bbb"/><circle cx="1640" cy="1012" r="1.6" fill="#999"/>
<path d="M1654 1006h14v6h-2v7h-10v-7h-2z" fill="#3aa0e0" stroke="#1070b8" stroke-width=".8"/><path d="M1658 1020h6" stroke="#222" stroke-width="2"/>
<rect x="1672" y="1005" width="9" height="9" fill="#fff" stroke="#1858a0"/><rect x="1675" y="1010" width="9" height="9" fill="#3a88d8" stroke="#1858a0"/><circle cx="1682" cy="1017" r="3.8" fill="#f05a28"/>
<path d="M1691 1018l6-10 5 10z" fill="#3aa0e0"/>
<rect x="1747" y="1008" width="8" height="11" fill="#fff" stroke="#1858a0"/><rect x="1751" y="1005" width="10" height="10" fill="#3a88d8" stroke="#1858a0"/>
<rect x="1768" y="1006" width="13" height="13" rx="1" fill="#2858c0"/><text x="1774.5" y="1016.5" text-anchor="middle" fill="#fff" style="font-size:10px;font-weight:bold">V</text>
<circle cx="1793" cy="1012.5" r="7" fill="#48c0a0"/><path d="M1790 1007q6 3 1 5q5 1 1 6" fill="none" stroke="#1860c0" stroke-width="2"/>
<rect x="1804.5" y="1005" width="14" height="15" rx="2" fill="#1e78d0"/><path d="M1811.5 1007v6M1808 1011.5l3.5 4 3.5-4z" stroke="#111" fill="#111"/>
<text x="1822" y="1017" fill="#000" textLength="60" lengthAdjust="spacingAndGlyphs" style="font-family:'Liberation Serif',serif;font-size:12px">Right Ctrl</text>
<!-- floating avatar -->
<circle cx="1717" cy="999" r="23.5" fill="#e6e8ea" stroke="#2a8cf0" stroke-width="2.4"/>
<path d="M1703 1010C1698 985 1706 979 1717 979C1728 979 1736 985 1731 1010Z" fill="#b8bbc0"/>
<ellipse cx="1711" cy="995" rx="2.6" ry="3.4" fill="#fff"/><circle cx="1711.5" cy="995.5" r="1.2" fill="#555"/><path d="M1720 995q2.5-3 5 0" fill="none" stroke="#fff" stroke-width="1.4"/>
<ellipse cx="1717" cy="1004" rx="10" ry="2.8" fill="#fff"/>
<path d="M1700 1007C1708 1013 1726 1013 1734 1007C1736 1012 1730 1018 1726 1019H1708C1704 1018 1698 1012 1700 1007Z" fill="#a4a7ac"/>
<rect x="1712" y="1013" width="13" height="9" fill="#f4f4f4"/>
</svg>
</body></html>
